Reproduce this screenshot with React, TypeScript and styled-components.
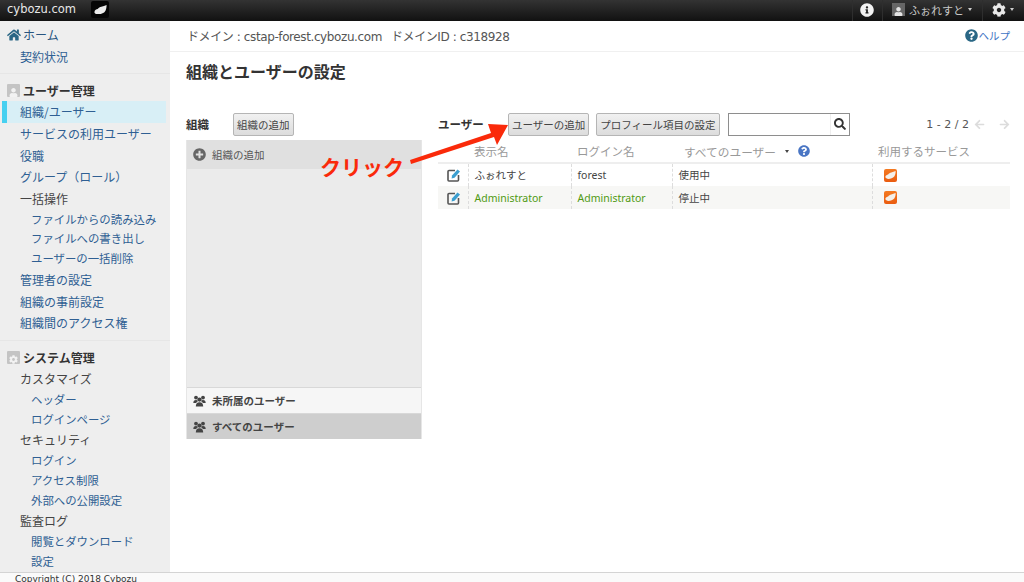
import React from 'react';
import styled, { createGlobalStyle } from 'styled-components';
import {
  FaArrowLeft,
  FaArrowRight,
  FaCog,
  FaHome,
  FaInfoCircle,
  FaPlusCircle,
  FaQuestionCircle,
  FaSearch,
  FaUser,
} from 'react-icons/fa';

const fontStack = `"DejaVu Sans", "Noto Sans CJK JP", sans-serif`;
const cjkStack = `"Noto Sans CJK JP", "DejaVu Sans", sans-serif`;
const cellStack = `"Noto Sans", "Noto Sans CJK JP", sans-serif`;

const GlobalStyle = createGlobalStyle`
  html, body {
    margin: 0;
    padding: 0;
    height: 100%;
    overflow: hidden;
    background: #fff;
    font-family: ${cjkStack};
  }
`;

/**********************************
  Top bar
**********************************/
const Page = styled.div`
  display: flex;
  flex-direction: column;
  width: 1024px;
  height: 582px;
  overflow: hidden;
  position: relative;
`;

const TopBar = styled.header`
  display: flex;
  align-items: stretch;
  height: 21px;
  flex: none;
  background: linear-gradient(#333333, #111111);
  color: #eee;
`;

const Brand = styled.div`
  font-family: ${fontStack};
  font-size: 11.5px;
  line-height: 18px;
  padding-left: 7px;
  width: 91px;
  box-sizing: border-box;
  color: #e8e8e8;
`;

const LogoTile = styled.div`
  width: 18px;
  height: 17px;
  margin-top: 1px;
  border-radius: 2px;
  background: #060606;
  display: flex;
  align-items: center;
  justify-content: center;
`;

const TopRight = styled.div`
  margin-left: auto;
  display: flex;
  align-items: stretch;
`;

const TopCell = styled.div<{ $width: number; $inset: number }>`
  display: flex;
  align-items: center;
  gap: 4px;
  width: ${(p) => p.$width}px;
  padding-left: ${(p) => p.$inset}px;
  border-left: 1px solid #2e2e2e;
  font-size: 11px;
  color: #c8c8c8;
  box-sizing: border-box;
  padding-bottom: 2px;
`;

const UserTile = styled.span`
  display: flex;
  align-items: flex-end;
  justify-content: center;
  width: 13px;
  height: 13px;
  background: #666;
  color: #e4e4e4;
  font-size: 9px;
`;

const Caret = styled.span`
  width: 0;
  height: 0;
  border-left: 2.5px solid transparent;
  border-right: 2.5px solid transparent;
  border-top: 3px solid ${(p) => p.color || '#ccc'};
`;

/**********************************
  Sidebar
**********************************/
const Body = styled.div`
  flex: 1;
  display: flex;
  min-height: 0;
`;

const Sidebar = styled.nav`
  width: 170px;
  flex: none;
  background: #eeeeee;
  padding-top: 3.5px;
  box-sizing: border-box;
  overflow: hidden;
`;

const NavSection = styled.div`
  padding: 0 0 6px;
  margin-bottom: 5px;
  border-bottom: 1px solid #e6e6e6;

  &:last-child {
    border-bottom: none;
  }
`;

const HomeRow = styled.div`
  display: flex;
  align-items: center;
  gap: 2px;
  height: 22px;
  margin-top: -1px;
  padding-left: 7px;
  font-size: 12px;
  color: #28557f;
`;

const SectionTitle = styled.div`
  display: flex;
  align-items: center;
  gap: 3px;
  height: 22px;
  padding-left: 7px;
  font-size: 12px;
  font-weight: 700;
  color: #333;
`;

const SectionIcon = styled.span`
  display: flex;
  align-items: flex-end;
  justify-content: center;
  width: 13px;
  height: 13px;
  background: #c4c4c4;
  color: #f2f2f2;
  font-size: 9px;
  border-radius: 1px;
`;

const NavItem = styled.div<{ $active?: boolean; $plain?: boolean }>`
  height: 21.7px;
  line-height: 21.7px;
  font-size: 12px;
  white-space: nowrap;
  margin: 0 4px 0 2px;
  padding-left: ${(p) => (p.$active ? 13 : 18)}px;
  color: ${(p) => (p.$plain ? '#444' : '#2f5f93')};
  background: ${(p) => (p.$active ? '#d8eff6' : 'transparent')};
  border-left: ${(p) => (p.$active ? '5px solid #46d0f0' : 'none')};
`;

const SubItem = styled.div`
  height: 19.8px;
  line-height: 19.8px;
  font-size: 11.4px;
  white-space: nowrap;
  padding-left: 31px;
  color: #2f5f93;
`;

/**********************************
  Main area
**********************************/
const Main = styled.main`
  flex: 1;
  min-width: 0;
  display: flex;
  flex-direction: column;
`;

const DomainBar = styled.div`
  display: flex;
  align-items: center;
  height: 31px;
  flex: none;
  padding: 0 14px 2px 17px;
  box-sizing: border-box;
  border-bottom: 1px solid #f0f0f0;
  color: #555;
`;

const DomainText = styled.span`
  font-family: ${fontStack};
  font-size: 12px;
  letter-spacing: -0.4px;
  margin-right: 9px;
  white-space: pre;
`;

const HelpLink = styled.div`
  margin-left: auto;
  display: flex;
  align-items: center;
  gap: 1px;
  font-size: 10.5px;
  color: #3f74c4;
`;

const PageTitle = styled.h1`
  margin: 8px 0 0 16px;
  font-size: 16px;
  line-height: 22px;
  font-weight: 700;
  color: #333;
`;

const Columns = styled.div`
  display: flex;
  gap: 16px;
  margin: 31px 14px 0 16px;
`;

const LeftColumn = styled.section`
  width: 236px;
  flex: none;
`;

const RightColumn = styled.section`
  flex: 1;
  min-width: 0;
`;

const ToolRow = styled.div`
  display: flex;
  align-items: center;
  height: 22px;
`;

const ToolLabel = styled.div<{ $width: number }>`
  width: ${(p) => p.$width}px;
  flex: none;
  font-size: 11.5px;
  font-weight: 700;
  color: #333;
`;

const ToolButton = styled.button`
  height: 23px;
  padding: 0 3px;
  margin-right: 7px;
  font-family: ${cjkStack};
  font-size: 10.5px;
  color: #444;
  border: 1px solid #b5b5b5;
  border-radius: 2px;
  background: linear-gradient(#f1f1f1, #dcdcdc);
  white-space: nowrap;
`;

const SearchBox = styled.div`
  display: flex;
  align-items: center;
  width: 122px;
  height: 23px;
  margin-left: 1px;
  box-sizing: border-box;
  border: 1px solid #8e8e8e;
  background: #fff;
  justify-content: flex-end;
  padding-right: 3px;
  color: #333;
  font-size: 12px;
`;

const SearchDivider = styled.span`
  width: 1px;
  align-self: stretch;
  background: #eee;
  margin-right: 3px;
`;

const Pager = styled.div`
  margin-left: auto;
  display: flex;
  align-items: center;
  gap: 5px;
  font-family: ${fontStack};
  font-size: 11px;
  color: #555;
`;

const PagerArrow = styled.span`
  display: flex;
  color: #dcdcdc;
  font-size: 11px;

  & + & {
    margin-left: 9px;
  }
`;

const TreePanel = styled.div`
  margin-top: 5px;
  height: 299px;
  display: flex;
  flex-direction: column;
  background: #ebebeb;
  border: 1px solid #e6e6e6;
  border-width: 0 1px;
  box-sizing: border-box;
`;

const TreeHead = styled.div`
  display: flex;
  align-items: center;
  gap: 6px;
  height: 29px;
  padding-left: 6px;
  background: #e0e0e0;
  font-size: 10.5px;
  color: #555;
`;

const TreeSpacer = styled.div`
  flex: 1;
`;

const TreeRow = styled.div<{ $selected?: boolean }>`
  display: flex;
  align-items: center;
  gap: 6px;
  height: 26px;
  padding-left: 6px;
  border-top: 1px solid #d8d8d8;
  box-sizing: border-box;
  background: ${(p) => (p.$selected ? '#cecece' : '#f6f6f6')};
  font-size: 10.5px;
  font-weight: 700;
  color: #444;
`;

const UserTable = styled.table`
  margin-top: 5px;
  width: 100%;
  table-layout: fixed;
  border-collapse: collapse;
`;

const HeadCell = styled.th<{ $width?: number }>`
  box-sizing: border-box;
  width: ${(p) => (p.$width ? `${p.$width}px` : 'auto')};
  height: 23px;
  padding: 0 0 0 6px;
  text-align: left;
  font-size: 11.5px;
  font-weight: 400;
  color: #999;
  border-bottom: 2px solid #eee;
`;

const FilterHead = styled.span`
  display: inline-flex;
  align-items: center;
  gap: 9px;
  padding-left: 6px;
  font-size: 11.7px;
`;

const Row = styled.tr<{ $tinted?: boolean }>`
  background: ${(p) => (p.$tinted ? '#f7f7f5' : '#fff')};
`;

const Cell = styled.td<{ $green?: boolean }>`
  box-sizing: border-box;
  height: 23px;
  line-height: 14px;
  padding: 0 0 0 6px;
  font-size: 10.5px;
  font-family: ${cellStack};
  color: ${(p) => (p.$green ? '#4f9a12' : '#444')};
  border-left: 1px dashed #ddd;
  white-space: nowrap;

  &:first-child {
    border-left: none;
    padding: 0 0 0 9px;
  }

  svg {
    display: block;
  }
`;

const ServiceTile = styled.div`
  display: flex;
  align-items: center;
  justify-content: center;
  width: 13px;
  height: 13px;
  margin-left: 5px;
  border-radius: 2px;
  background: linear-gradient(#f47a22, #ea5c10);
`;

const Footer = styled.footer`
  height: 10px;
  flex: none;
  border-top: 1px solid #d4d4d4;
  background: #fafafa;
  font-family: ${fontStack};
  font-size: 9px;
  line-height: 12px;
  padding-left: 15px;
  color: #333;
  box-sizing: border-box;
  overflow: hidden;
`;

/**********************************
  Annotation over the screen
**********************************/
const Annotation = styled.div`
  position: absolute;
  left: 320px;
  top: 153px;
  font-size: 21px;
  line-height: 26px;
  font-weight: 700;
  color: #fa2a0a;
  white-space: nowrap;
`;

const ArrowSvg = styled.svg`
  position: absolute;
  left: 400px;
  top: 115px;
`;

const Blob = ({ size, fill }: { size: number; fill: string }) => (
  <svg width={size} height={size * 0.75} viewBox="0 0 16 12">
    <path
      d="M0.5 8.5 C1 6 3 5.5 4.5 5 C5.5 3 7.5 2.5 9 2 C11 1.5 13.5 1 15.5 0 C15.5 3 15 6 13.5 8 C11.5 10.5 8 11.5 5 11.5 C3 11.5 0.5 10.5 0.5 8.5 Z"
      fill={fill}
    />
  </svg>
);

const EditIcon = () => (
  <svg width="14" height="14" viewBox="0 0 14 14">
    <path d="M8 2.5 H2 Q1 2.5 1 3.5 V12 Q1 13 2 13 H10.5 Q11.5 13 11.5 12 V7" fill="none" stroke="#555" strokeWidth="1.6" />
    <path d="M5 7.5 L10.5 1.5 L13 3.5 L7.5 9.8 L4.6 10.5 Z" fill="#3c9fd0" />
  </svg>
);

const UsersIcon = () => (
  <svg width="13" height="12" viewBox="0 0 13 12">
    <g fill="#444">
      <circle cx="3" cy="2.6" r="1.9" />
      <circle cx="10" cy="2.6" r="1.9" />
      <path d="M0.3 8 Q0.3 5 3 5 Q4.6 5 5 6 L3 8 Z" />
      <path d="M12.7 8 Q12.7 5 10 5 Q8.4 5 8 6 L10 8 Z" />
      <circle cx="6.5" cy="4.6" r="2.1" />
      <path d="M2.8 11.5 Q2.8 7.2 6.5 7.2 Q10.2 7.2 10.2 11.5 Z" />
    </g>
  </svg>
);

function App() {
  return (
    <Page>
      <GlobalStyle />
      <TopBar>
        <Brand>cybozu.com</Brand>
        <LogoTile>
          <Blob size={13} fill="#ececec" />
        </LogoTile>
        <TopRight>
          <TopCell $width={30} $inset={7}>
            <FaInfoCircle size={14} color="#f2f2f2" />
          </TopCell>
          <TopCell $width={100} $inset={9}>
            <UserTile>
              <FaUser />
            </UserTile>
            <span>ふぉれすと</span>
            <Caret />
          </TopCell>
          <TopCell $width={42} $inset={9}>
            <FaCog size={14} color="#e8e8e8" />
            <Caret />
          </TopCell>
        </TopRight>
      </TopBar>

      <Body>
        <Sidebar>
          <NavSection>
            <HomeRow>
              <FaHome size={14} color="#2a6785" />
              ホーム
            </HomeRow>
            <NavItem>契約状況</NavItem>
          </NavSection>

          <NavSection>
            <SectionTitle>
              <SectionIcon>
                <FaUser />
              </SectionIcon>
              ユーザー管理
            </SectionTitle>
            <NavItem $active>組織/ユーザー</NavItem>
            <NavItem>サービスの利用ユーザー</NavItem>
            <NavItem>役職</NavItem>
            <NavItem>グループ（ロール）</NavItem>
            <NavItem $plain>一括操作</NavItem>
            <SubItem>ファイルからの読み込み</SubItem>
            <SubItem>ファイルへの書き出し</SubItem>
            <SubItem>ユーザーの一括削除</SubItem>
            <NavItem>管理者の設定</NavItem>
            <NavItem>組織の事前設定</NavItem>
            <NavItem>組織間のアクセス権</NavItem>
          </NavSection>

          <NavSection>
            <SectionTitle>
              <SectionIcon>
                <FaCog />
              </SectionIcon>
              システム管理
            </SectionTitle>
            <NavItem $plain>カスタマイズ</NavItem>
            <SubItem>ヘッダー</SubItem>
            <SubItem>ログインページ</SubItem>
            <NavItem $plain>セキュリティ</NavItem>
            <SubItem>ログイン</SubItem>
            <SubItem>アクセス制限</SubItem>
            <SubItem>外部への公開設定</SubItem>
            <NavItem $plain>監査ログ</NavItem>
            <SubItem>閲覧とダウンロード</SubItem>
            <SubItem>設定</SubItem>
          </NavSection>
        </Sidebar>

        <Main>
          <DomainBar>
            <DomainText>ドメイン : cstap-forest.cybozu.com</DomainText>
            <DomainText>ドメインID : c318928</DomainText>
            <HelpLink>
              <FaQuestionCircle size={13} color="#2a6785" />
              ヘルプ
            </HelpLink>
          </DomainBar>
          <PageTitle>組織とユーザーの設定</PageTitle>

          <Columns>
            <LeftColumn>
              <ToolRow>
                <ToolLabel $width={47}>組織</ToolLabel>
                <ToolButton>組織の追加</ToolButton>
              </ToolRow>
              <TreePanel>
                <TreeHead>
                  <FaPlusCircle size={13} color="#666" />
                  組織の追加
                </TreeHead>
                <TreeSpacer />
                <TreeRow>
                  <UsersIcon />
                  未所属のユーザー
                </TreeRow>
                <TreeRow $selected>
                  <UsersIcon />
                  すべてのユーザー
                </TreeRow>
              </TreePanel>
            </LeftColumn>

            <RightColumn>
              <ToolRow>
                <ToolLabel $width={70}>ユーザー</ToolLabel>
                <ToolButton>ユーザーの追加</ToolButton>
                <ToolButton>プロフィール項目の設定</ToolButton>
                <SearchBox>
                  <SearchDivider />
                  <FaSearch />
                </SearchBox>
                <Pager>
                  1 - 2 / 2
                  <PagerArrow>
                    <FaArrowLeft />
                  </PagerArrow>
                  <PagerArrow>
                    <FaArrowRight />
                  </PagerArrow>
                </Pager>
              </ToolRow>
              <UserTable>
                <thead>
                  <tr>
                    <HeadCell $width={30} />
                    <HeadCell $width={103}>表示名</HeadCell>
                    <HeadCell $width={101}>ログイン名</HeadCell>
                    <HeadCell $width={200}>
                      <FilterHead>
                        すべてのユーザー
                        <Caret color="#444" />
                        <FaQuestionCircle size={12} color="#4a76c4" />
                      </FilterHead>
                    </HeadCell>
                    <HeadCell>利用するサービス</HeadCell>
                  </tr>
                </thead>
                <tbody>
                  <Row>
                    <Cell>
                      <EditIcon />
                    </Cell>
                    <Cell>ふぉれすと</Cell>
                    <Cell>forest</Cell>
                    <Cell>使用中</Cell>
                    <Cell>
                      <ServiceTile>
                        <Blob size={11} fill="#f4f0ea" />
                      </ServiceTile>
                    </Cell>
                  </Row>
                  <Row $tinted>
                    <Cell>
                      <EditIcon />
                    </Cell>
                    <Cell $green>Administrator</Cell>
                    <Cell $green>Administrator</Cell>
                    <Cell>停止中</Cell>
                    <Cell>
                      <ServiceTile>
                        <Blob size={11} fill="#f4f0ea" />
                      </ServiceTile>
                    </Cell>
                  </Row>
                </tbody>
              </UserTable>
            </RightColumn>
          </Columns>
        </Main>
      </Body>

      <Footer>Copyright (C) 2018 Cybozu</Footer>

      <Annotation>クリック</Annotation>
      <ArrowSvg width="115" height="60" viewBox="0 0 115 60">
        <path d="M10 45 L91 18 L88 9 L108 10 L97 30 L94 22 L11 49 Z" fill="#fa2a0a" />
      </ArrowSvg>
    </Page>
  );
}

export default App;
